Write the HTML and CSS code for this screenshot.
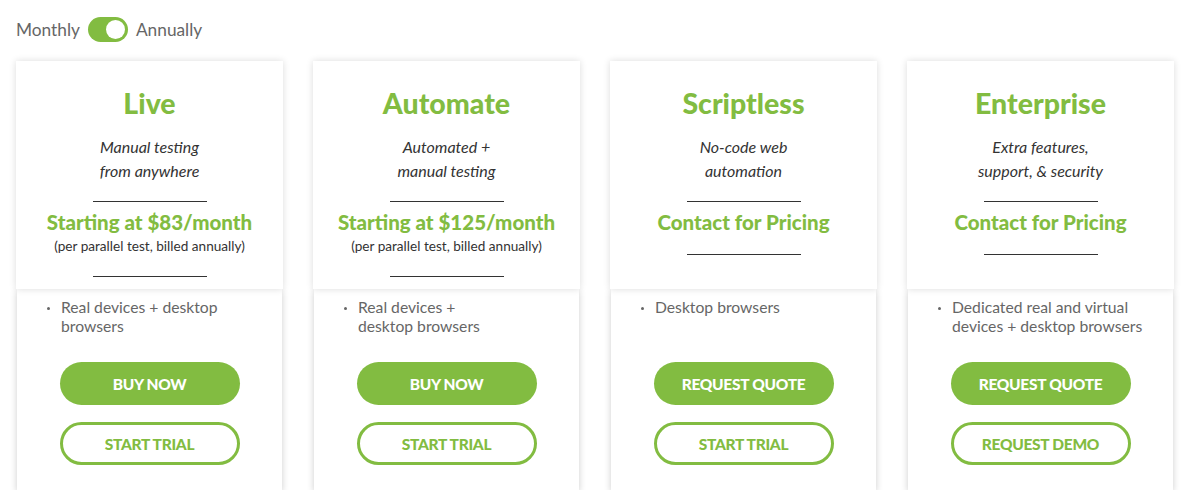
FILE: index.html
```html
<!DOCTYPE html>
<html>
<head>
<meta charset="utf-8">
<link rel="stylesheet" href="styles.css">
</head>
<body>
<div class="page">
  <div class="billing">
    <span class="billing-label">Monthly</span>
    <span class="switch"><span class="knob"></span></span>
    <span class="billing-label">Annually</span>
  </div>
  <div class="plans">
    <div class="card">
      <div class="card-top">
        <h2 class="plan-name">Live</h2>
        <p class="plan-desc">Manual testing<br>from anywhere</p>
        <hr class="rule">
        <div class="price">Starting at $83/month</div>
        <div class="price-note">(per parallel test, billed annually)</div>
        <hr class="rule">
      </div>
      <div class="card-bottom">
        <ul class="features"><li>Real devices + desktop<br>browsers</li></ul>
        <a class="btn btn-solid">BUY NOW</a>
        <a class="btn btn-outline">START TRIAL</a>
      </div>
    </div>
    <div class="card">
      <div class="card-top">
        <h2 class="plan-name">Automate</h2>
        <p class="plan-desc">Automated +<br>manual testing</p>
        <hr class="rule">
        <div class="price">Starting at $125/month</div>
        <div class="price-note">(per parallel test, billed annually)</div>
        <hr class="rule">
      </div>
      <div class="card-bottom">
        <ul class="features"><li>Real devices +<br>desktop browsers</li></ul>
        <a class="btn btn-solid">BUY NOW</a>
        <a class="btn btn-outline">START TRIAL</a>
      </div>
    </div>
    <div class="card">
      <div class="card-top">
        <h2 class="plan-name">Scriptless</h2>
        <p class="plan-desc">No-code web<br>automation</p>
        <hr class="rule">
        <div class="price">Contact for Pricing</div>
        <hr class="rule">
      </div>
      <div class="card-bottom">
        <ul class="features"><li>Desktop browsers</li></ul>
        <a class="btn btn-solid">REQUEST QUOTE</a>
        <a class="btn btn-outline">START TRIAL</a>
      </div>
    </div>
    <div class="card">
      <div class="card-top">
        <h2 class="plan-name">Enterprise</h2>
        <p class="plan-desc">Extra features,<br>support, &amp; security</p>
        <hr class="rule">
        <div class="price">Contact for Pricing</div>
        <hr class="rule">
      </div>
      <div class="card-bottom">
        <ul class="features"><li>Dedicated real and virtual<br>devices + desktop browsers</li></ul>
        <a class="btn btn-solid">REQUEST QUOTE</a>
        <a class="btn btn-outline">REQUEST DEMO</a>
      </div>
    </div>
  </div>
</div>
</body>
</html>
```

FILE: styles.css
```css
* { box-sizing: border-box; }
html, body { margin: 0; padding: 0; background: #fff; }
body {
  font-family: Lato, "Open Sans", "Liberation Sans", sans-serif;
  color: #333;
}
.page {
  padding: 17px 16px 0 16px;
}
.billing {
  display: flex;
  align-items: center;
  gap: 8px;
  height: 25px;
}
.billing-label {
  font-size: 17.3px;
  color: #666;
}
.switch {
  width: 40px;
  height: 25px;
  border-radius: 13px;
  background: #82bc41;
  display: flex;
  align-items: center;
  justify-content: flex-end;
  padding-right: 3px;
}
.knob {
  width: 19px;
  height: 19px;
  border-radius: 50%;
  background: #fff;
}
.plans {
  display: flex;
  gap: 30px;
  margin-top: 19px;
}
.card {
  width: 267px;
  display: flex;
  flex-direction: column;
}
.card-top {
  position: relative;
  z-index: 1;
  background: #fff;
  height: 228px;
  box-shadow: 0 0 7px rgba(0,0,0,0.14);
  display: flex;
  flex-direction: column;
  align-items: center;
  padding-top: 27px;
  text-align: center;
}
.plan-name {
  margin: 0;
  font-size: 28.5px;
  line-height: 30px;
  font-weight: 900;
  color: #82bc41;
}
.plan-desc {
  margin: 17px 0 0 0;
  font-size: 16px;
  line-height: 24px;
  font-style: italic;
  color: #333;
}
.rule {
  width: 114px;
  height: 1px;
  border: 0;
  background: #333;
  margin: 18px 0 0 0;
}
.price {
  margin-top: 8px;
  font-size: 20.5px;
  line-height: 24px;
  font-weight: 900;
  color: #82bc41;
}
.price + .rule { margin-top: 20px; }
.price-note {
  margin-top: 2px;
  font-size: 13.6px;
  line-height: 20px;
  color: #333;
}
.price-note + .rule { margin-top: 20px; }
.card-bottom {
  margin: 0 1px;
  background: #fff;
  box-shadow: 0 2px 7px rgba(0,0,0,0.2);
  display: flex;
  flex-direction: column;
  align-items: center;
  padding: 9px 0 25px 0;
}
.features {
  align-self: stretch;
  margin: 0 0 26px 0;
  padding: 0 0 0 44px;
  height: 38px;
  font-size: 15.7px;
  line-height: 19px;
  color: #666;
  list-style: none;
}
.features li {
  position: relative;
}
.features li::before {
  content: "";
  position: absolute;
  left: -14px;
  top: 9px;
  width: 3px;
  height: 3px;
  border-radius: 50%;
  background: #666;
}
.btn {
  width: 180px;
  height: 43px;
  border-radius: 22px;
  display: flex;
  align-items: center;
  justify-content: center;
  font-size: 15.5px;
  font-weight: 900;
  letter-spacing: -0.3px;
  text-decoration: none;
}
.btn-solid {
  background: #82bc41;
  color: #fff;
}
.btn-outline {
  margin-top: 17px;
  border: 3px solid #82bc41;
  color: #82bc41;
  background: #fff;
}
```
